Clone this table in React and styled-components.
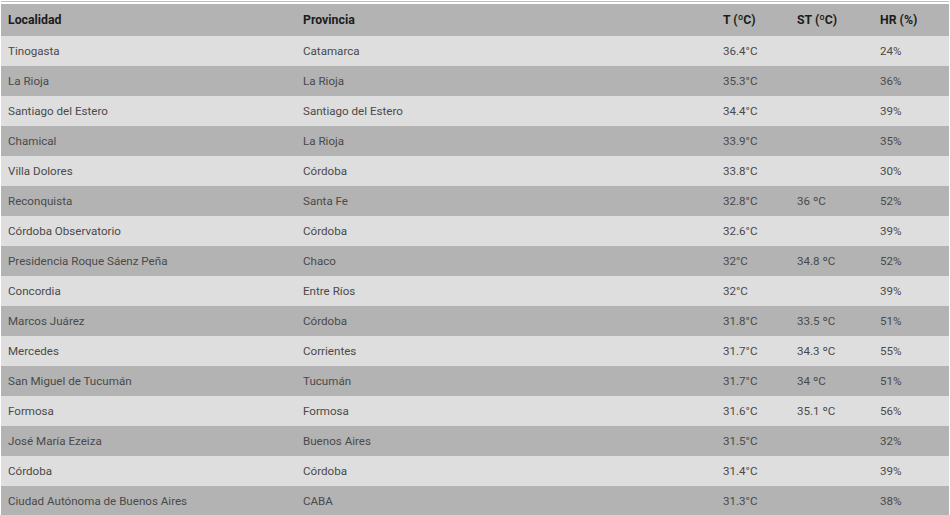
import React from 'react';
import styled, { createGlobalStyle } from 'styled-components';

const GlobalStyle = createGlobalStyle`
  body {
    margin: 0;
    background: #ffffff;
    font-family: Roboto, "Liberation Sans", Arial, sans-serif;
  }
`;

const Page = styled.div`
  width: 950px;
  height: 515px;
  overflow: hidden;
  padding-top: 1px;
  box-sizing: border-box;
`;

const Table = styled.div`
  width: 948px;
  margin-left: 1px;
  border-top: 1px solid #a9c4d8;
  padding-top: 2px;
`;

const Row = styled.div`
  display: grid;
  grid-template-columns: 295px 420px 74px 83px 1fr;
  height: ${(p) => (p.head ? '32px' : '30px')};
  align-items: center;
  background: ${(p) => (p.dark ? '#b3b3b3' : '#dedede')};
  color: ${(p) => (p.head ? '#1c1c1c' : '#4a4a4a')};
  font-size: ${(p) => (p.head ? '12.3px' : '11.6px')};
  font-weight: ${(p) => (p.head ? 700 : 400)};
`;

const Cell = styled.div`
  padding-left: 7px;
  white-space: nowrap;
`;

const rows = [
  ['Tinogasta', 'Catamarca', '36.4°C', '', '24%'],
  ['La Rioja', 'La Rioja', '35.3°C', '', '36%'],
  ['Santiago del Estero', 'Santiago del Estero', '34.4°C', '', '39%'],
  ['Chamical', 'La Rioja', '33.9°C', '', '35%'],
  ['Villa Dolores', 'Córdoba', '33.8°C', '', '30%'],
  ['Reconquista', 'Santa Fe', '32.8°C', '36 ºC', '52%'],
  ['Córdoba Observatorio', 'Córdoba', '32.6°C', '', '39%'],
  ['Presidencia Roque Sáenz Peña', 'Chaco', '32°C', '34.8 ºC', '52%'],
  ['Concordia', 'Entre Ríos', '32°C', '', '39%'],
  ['Marcos Juárez', 'Córdoba', '31.8°C', '33.5 ºC', '51%'],
  ['Mercedes', 'Corrientes', '31.7°C', '34.3 ºC', '55%'],
  ['San Miguel de Tucumán', 'Tucumán', '31.7°C', '34 ºC', '51%'],
  ['Formosa', 'Formosa', '31.6°C', '35.1 ºC', '56%'],
  ['José María Ezeiza', 'Buenos Aires', '31.5°C', '', '32%'],
  ['Córdoba', 'Córdoba', '31.4°C', '', '39%'],
  ['Ciudad Autónoma de Buenos Aires', 'CABA', '31.3°C', '', '38%'],
];

export default function App() {
  return (
    <Page>
      <GlobalStyle />
      <Table>
        <Row head dark>
          <Cell>Localidad</Cell>
          <Cell>Provincia</Cell>
          <Cell>T (ºC)</Cell>
          <Cell>ST (ºC)</Cell>
          <Cell>HR (%)</Cell>
        </Row>
        {rows.map((r, i) => (
          <Row key={i} dark={i % 2 === 1}>
            {r.map((c, j) => (
              <Cell key={j}>{c}</Cell>
            ))}
          </Row>
        ))}
      </Table>
    </Page>
  );
}
